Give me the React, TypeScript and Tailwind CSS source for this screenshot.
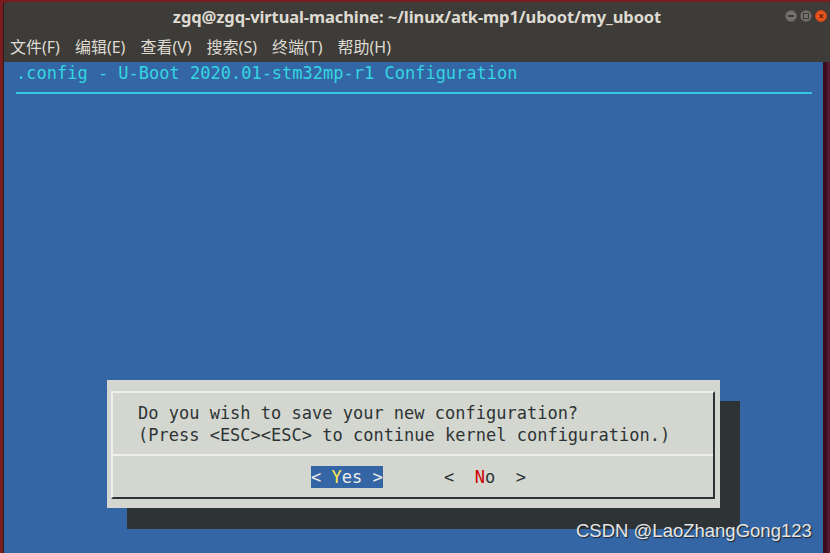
import React from "react";

const mono = { fontFamily: '"DejaVu Sans Mono", monospace' } as const;

export default function App() {
  return (
    <div className="w-[830px] h-[553px] bg-[#7a1d1f] flex flex-col overflow-hidden relative">
      <div className="h-[2px] shrink-0" />
      <div className="flex-1 flex min-h-0">
        <div className="w-[4px] shrink-0 border-r border-[#2a1a1a]" />
        <div className="flex-1 flex flex-col min-w-0">
          {/* title bar */}
          <div className="h-[30px] bg-[#3d3c38] rounded-tl-[4px] flex items-center relative shrink-0">
            <div
              className="flex-1 text-center text-[#dfdbd2] font-bold text-[16.5px] leading-none tracking-[-0.1px]"
              style={{ fontFamily: '"Noto Sans", "Open Sans", sans-serif' }}
            >
              zgq@zgq-virtual-machine: ~/linux/atk-mp1/uboot/my_uboot
            </div>
            <div className="absolute right-[3px] top-[8px] flex gap-[3px]">
              <div className="w-[12px] h-[12px] rounded-full bg-[#74726e] border border-[#5a5955] flex items-center justify-center">
                <div className="w-[6px] h-[2px] bg-[#3c3b37]" />
              </div>
              <div className="w-[12px] h-[12px] rounded-full bg-[#74726e] border border-[#5a5955] flex items-center justify-center">
                <div className="w-[6px] h-[6px] border border-[#3c3b37]" />
              </div>
              <div className="w-[12px] h-[12px] rounded-full bg-[#e9541f] border border-[#c4441a] flex items-center justify-center text-[#5a2010] text-[10px] leading-none font-bold">
                ×
              </div>
            </div>
          </div>
          {/* menu bar */}
          <div
            className="h-[30px] bg-[#3d3c38] flex items-center gap-[15px] pl-[6px] text-[16px] text-[#dfdbd2] shrink-0"
            style={{ fontFamily: '"Noto Sans", "Noto Sans CJK SC", sans-serif' }}
          >
            <span>文件(F)</span>
            <span>编辑(E)</span>
            <span>查看(V)</span>
            <span>搜索(S)</span>
            <span>终端(T)</span>
            <span>帮助(H)</span>
          </div>
          {/* terminal */}
          <div className="flex-1 flex min-h-0">
            <div className="flex-1 bg-[#3465a4] flex flex-col text-[17px] leading-[22px]" style={mono}>
              <div className="pl-[12px] text-[#34d6e2] whitespace-pre">
                .config - U-Boot 2020.01-stm32mp-r1 Configuration
              </div>
              <div className="mt-[8px] ml-[12px] mr-[11px] h-[2px] bg-[#34c8e0]" />
              <div className="mt-[286px] ml-[103px] w-[613px] h-[128px] bg-[#d3d7cf] shadow-[20px_21px_0_0_#2e3436] pt-[11px] pl-[4px] pr-[5px]">
                <div className="border-t-2 border-l-2 border-t-[#eeeeec] border-l-[#eeeeec] border-r-2 border-b-2 border-r-[#2e3436] border-b-[#2e3436] h-[108px] flex flex-col">
                  <div className="pt-[9px] pl-[25px] text-[#2e3436] whitespace-pre">
                    <div>Do you wish to save your new configuration?</div>
                    <div>(Press &lt;ESC&gt;&lt;ESC&gt; to continue kernel configuration.)</div>
                  </div>
                  <div className="mt-[8px] h-[2px] bg-[#eeeeec]" />
                  <div className="mt-[10px] pl-[198px] whitespace-pre text-[#2e3436] flex">
                    <span className="bg-[#3465a4] text-[#eeeeec]">
                      {"< "}
                      <span className="text-[#fce94f]">Y</span>
                      {"es >"}
                    </span>
                    <span>{"      <  "}</span>
                    <span className="text-[#cc0000]">N</span>
                    <span>{"o  >"}</span>
                  </div>
                </div>
              </div>
            </div>
            <div className="w-[4px] bg-[#3a0e20]" />
            <div className="w-[3px] bg-[#55182f]" />
          </div>
        </div>
      </div>
      <div
        className="absolute left-[576px] top-[520px] text-[18.5px] leading-[22px] text-[#e6e6e6] [text-shadow:1px_1px_1px_#222]"
        style={{ fontFamily: '"Liberation Sans", Arial, sans-serif' }}
      >
        CSDN @LaoZhangGong123
      </div>
    </div>
  );
}
